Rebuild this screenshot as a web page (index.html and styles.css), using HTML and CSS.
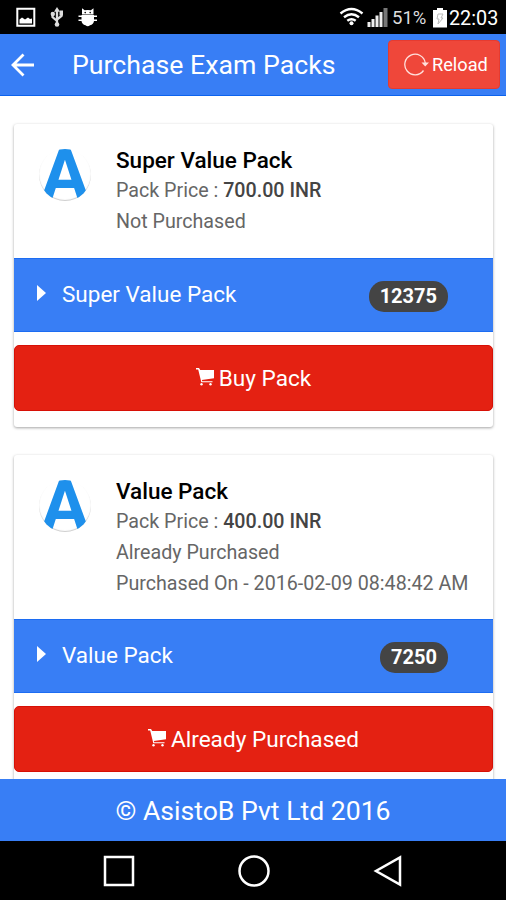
FILE: index.html
```
<!DOCTYPE html>
<html lang="en">
<head>
<meta charset="utf-8">
<title>Purchase Exam Packs</title>
<link rel="stylesheet" href="styles.css">
</head>
<body>
<svg width="0" height="0" class="defs">
  <symbol id="cart" viewBox="0 0 18 18"><path d="M0 0h3l1.200 2H18v8.300L5.800 12l.5 1.200h10.200v1H5.300L2.200 1.500H0z"/><circle cx="5.500" cy="16.300" r="1.200"/><circle cx="14.500" cy="16.300" r="1.200"/></symbol>
</svg>
<div class="status">
  <svg class="notify" width="100" height="34" viewBox="0 0 100 34">
    <path d="M17.300 8.700h17v17h-17z" fill="none" stroke="#fff" stroke-width="2"/>
    <path d="M19.500 23.500V19.500l2.500-2 3 2 3-2 2 1.500 2-.5v5z" fill="#fff"/>
    <path d="M57 9v15M52.500 14v3l4.500 4M61.500 12v4L57 19.500" fill="none" stroke="#ddd" stroke-width="2.300"/>
    <path d="M54 11.800 57 7l3 4.800z" fill="#ddd"/><circle cx="57" cy="24.500" r="2.300" fill="#ddd"/><circle cx="52.800" cy="14" r="2.200" fill="#ddd"/><path d="M59.500 10.500h3.500V15.500h-3.500z" fill="#ddd"/>
    <path d="M82 14.500V8.300l2.700 1.900q3.100-.6 6.200 0l2.600-1.900v6.200zM81.500 15h12.500v6a5 5 0 0 1-4 4.300q-2.200 1.800-4.500 0a5 5 0 0 1-4-4.300zM78.500 15.500h18.500V17H78.500zM78.500 19.500h18.500V21H78.500z" fill="#fff"/>
    <circle cx="85.200" cy="12.600" r=".8"/><circle cx="90.200" cy="12.600" r=".8"/>
  </svg>
  <div class="signals">
    <svg width="50" height="34" viewBox="338 0 50 34">
      <path d="M339.500 13.500Q350.500 4.500 361.500 13.500M343 17.300q7.500-6 15 0M346.300 20.800q4.200-3.300 8.400 0" fill="none" stroke="#fff" stroke-width="2.400"/><circle cx="350.500" cy="23.300" r="2" fill="#fff"/>
      <path d="M366.500 22h3v5h-3zM370.500 19h3v8h-3zM374.500 15.500h3V27h-3zM378.500 12h3v15h-3z" fill="#eee"/><path d="M382.500 8h4v19h-4z" fill="#777"/>
    </svg>
    <span class="percent">51%</span>
    <svg class="battery" width="14" height="20" viewBox="0 0 14 20"><path d="M4 0h6v2h4v17.500H0V2h4z" fill="#fff"/><path d="M5 6h5l-2 4h2l-5 6 1-5H4z" fill="none" stroke="#bbb"/></svg>
    <span class="clock">22:03</span>
  </div>
</div>
<header class="bar">
  <svg class="back" width="24" height="24" viewBox="0 0 24 24"><path d="M12.500 1.500 2 12l10.500 10.500M2 12h21" fill="none" stroke="#fff" stroke-width="2.800"/></svg>
  <h1>Purchase Exam Packs</h1>
  <button class="reload"><svg width="26" height="24" viewBox="0 0 26 24"><path d="M20.500 17.500A10.300 10.300 0 1 1 22.300 10" fill="none" stroke="#ffe0dc" stroke-width="1.300"/><path d="M18.500 9.500h7.500l-3.800 4z" fill="#ffe0dc"/></svg><span>Reload</span></button>
</header>
<main>
  <section class="card">
    <div class="info">
      <div class="logo"><span>A</span></div>
      <div class="details"><h2>Super Value Pack</h2><p>Pack Price : <b>700.00 INR</b></p><p>Not Purchased</p></div>
    </div>
    <div class="strip"><i class="arrow"></i><span class="name">Super Value Pack</span><span class="count">12375</span></div>
    <button class="buy"><svg width="18" height="18"><use href="#cart"/></svg><span>Buy Pack</span></button>
  </section>
  <section class="card">
    <div class="info tall">
      <div class="logo"><span>A</span></div>
      <div class="details"><h2>Value Pack</h2><p>Pack Price : <b>400.00 INR</b></p><p>Already Purchased</p><p>Purchased On - 2016-02-09 08:48:42 AM</p></div>
    </div>
    <div class="strip"><i class="arrow"></i><span class="name">Value Pack</span><span class="count">7250</span></div>
    <button class="buy"><svg width="18" height="18"><use href="#cart"/></svg><span>Already Purchased</span></button>
  </section>
</main>
<footer>© AsistoB Pvt Ltd 2016</footer>
<nav>
  <svg width="32" height="32" viewBox="0 0 32 32"><path d="M2 2h28v28H2z"/></svg>
  <svg width="32" height="32" viewBox="0 0 32 32"><circle cx="16" cy="16" r="14.500"/></svg>
  <svg width="32" height="32" viewBox="0 0 32 32"><path d="M28 2.500v27L4 16z"/></svg>
</nav>
</body>
</html>
```
FILE: styles.css
```
* { box-sizing: border-box; }
body {
  margin: 0;
  width: 506px;
  height: 900px;
  display: flex;
  flex-direction: column;
  overflow: hidden;
  background: #fff;
  font-family: Roboto, sans-serif;
}
h1, h2, p { margin: 0; font-weight: 400; }
button { border: 0; font-family: inherit; color: #fff; }
svg { display: block; flex: none; }
.defs { display: none; }
.status {
  height: 34px;
  flex: none;
  display: flex;
  justify-content: space-between;
  background: #000;
  color: #fff;
}
.signals { display: flex; align-items: center; padding-right: 9px; }
.percent { width: 41px; margin-left: 3px; font-size: 18.5px; color: #ddd; white-space: nowrap; padding-top: 2px; }
.battery { margin: 1px 2px 0 0; }
.clock { width: 48px; font-size: 19.800px; padding-top: 3px; white-space: nowrap; }
.bar {
  height: 62px;
  flex: none;
  display: flex;
  align-items: center;
  padding: 0 6px 0 11px;
  background: #387ef5;
  border-bottom: 1px solid #0c63ee;
  color: #fff;
}
h1 { margin-left: 37px; font-size: 26.700px; line-height: 60px; white-space: nowrap; }
.reload {
  width: 112px;
  height: 49px;
  margin-left: auto;
  padding: 0 0 0 14px;
  display: flex;
  align-items: center;
  gap: 3px;
  border-radius: 4px;
  background: #ef473a;
  border: 1px solid #e63b30;
  font-size: 18.200px;
}
main { flex: 1; min-height: 0; overflow: hidden; padding: 28px 13px 0 14px; }
.card {
  padding-bottom: 16px;
  margin-bottom: 28px;
  border-radius: 3px;
  background: #fff;
  box-shadow: 0 1px 3px rgba(0, 0, 0, .36);
}
.info { height: 134px; display: flex; padding: 20px 0 0 25px; }
.info.tall { height: 164px; }
.logo {
  width: 52px;
  height: 52px;
  margin-top: 5px;
  border-radius: 50%;
  overflow: hidden;
  box-shadow: inset 0 -1px 1px #ccc;
  color: #1e90ec;
  display: flex;
  justify-content: center;
  font: 700 72px/52px Roboto, sans-serif;
}
.details { margin-left: 25px; white-space: nowrap; color: #666; }
h2 { font-size: 22.500px; line-height: 32px; font-weight: 500; color: #000; }
p { font-size: 19.660px; line-height: 31px; }
h2 + p { margin-top: -1px; }
b { font-weight: 500; color: #444; }
.strip {
  height: 74px;
  display: flex;
  align-items: center;
  padding: 0 45px 0 23px;
  background: #387ef5;
  border: solid #1c6cf2;
  border-width: 1px 0;
  color: #fff;
}
.arrow { border: solid transparent; border-width: 8px 0 8px 9px; border-left-color: #fff; margin-top: -4px; }
.name { margin: -2px auto 0 16px; font-size: 22.500px; }
.count {
  height: 31px;
  margin-top: 2px;
  padding: 0 11px;
  border-radius: 15px;
  background: #444;
  font-size: 20px;
  line-height: 31px;
  font-weight: 700;
}
.buy {
  width: 100%;
  height: 66px;
  margin-top: 13px;
  padding: 0;
  display: flex;
  justify-content: center;
  align-items: center;
  gap: 5px;
  border-radius: 5px;
  background: #e42112;
  border: 1px solid #d71006;
  font-size: 22.600px;
}
.buy svg { fill: #fff; margin-top: -3px; }
footer {
  height: 62px;
  flex: none;
  background: #387ef5;
  color: #fff;
  font-size: 26.600px;
  line-height: 63px;
  text-align: center;
}
nav {
  height: 59px;
  flex: none;
  display: flex;
  justify-content: space-between;
  align-items: center;
  padding: 0 102px 0 103px;
  background: #000;
}
nav svg { fill: none; stroke: #fff; stroke-width: 2.5; }
```
